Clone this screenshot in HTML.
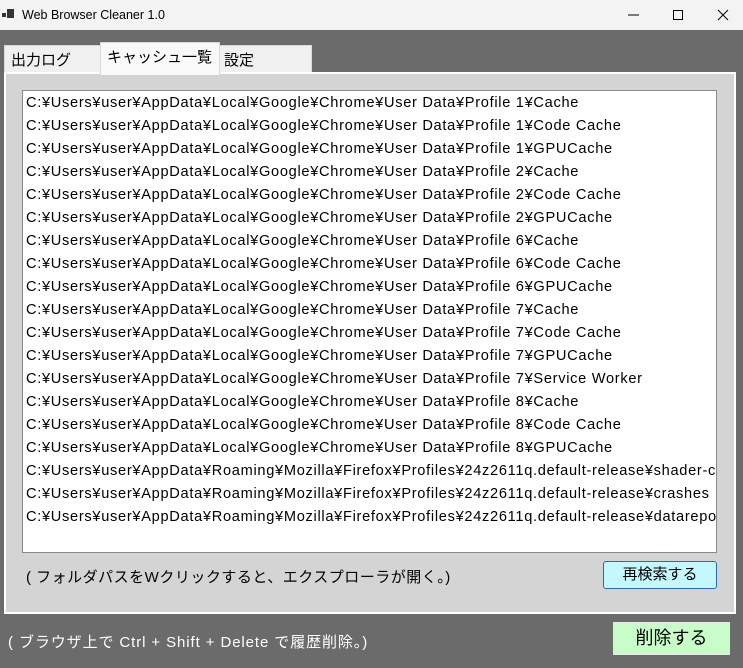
<!DOCTYPE html>
<html><head><meta charset="utf-8"><style>
*{margin:0;padding:0;box-sizing:border-box}
body{width:743px;height:668px;background:#6b6b6b;font-family:"Liberation Sans","Noto Sans CJK JP",sans-serif;position:relative;overflow:hidden}
.title{position:absolute;left:0;top:0;width:743px;height:30px;background:#f3f3f3;font-size:12.5px;color:#000}
.title .t{position:absolute;left:22px;top:8px}
.tab{position:absolute;background:#f0f0f0;border:1px solid #d9d9d9;border-bottom:none;font-size:15px;color:#000;padding:3px 0 0 6px}
.panel{position:absolute;left:4px;top:72px;width:732px;height:542px;background:#d4d4d4;border:2px solid #fff}
.list{position:absolute;left:22px;top:90px;width:695px;height:463px;background:#fff;border:1px solid #8a8a8a;overflow:hidden;font-size:14.6px;letter-spacing:0.7px;color:#000;padding-top:1px}
.list div{height:23px;line-height:23px;padding-left:3px;white-space:nowrap}
.btn{position:absolute;font-size:15px;text-align:center;color:#000}
.lbl{position:absolute;font-size:15px;white-space:nowrap}
</style></head><body>
<div class="title">
<svg style="position:absolute;left:2px;top:9px" width="14" height="12"><rect x="0" y="4" width="4" height="4" fill="#333"/><rect x="5" y="0" width="7" height="9" fill="#333"/></svg>
<span class="t">Web Browser Cleaner 1.0</span>
<svg style="position:absolute;left:626px;top:8px" width="110" height="14"><line x1="2" y1="7" x2="13" y2="7" stroke="#000"/><rect x="47.5" y="2.5" width="9" height="9" fill="none" stroke="#000"/><path d="M92 2 L102 12 M102 2 L92 12" stroke="#000"/></svg>
</div>
<div class="tab" style="left:4px;top:45px;width:97px;height:28px">出力ログ</div>
<div class="tab" style="left:219px;top:45px;width:93px;height:28px;padding-left:4px">設定</div>
<div class="panel"></div>
<div class="tab" style="left:100px;top:42px;width:120px;height:33px;background:#f9f9f9;border-color:#d9d9d9">キャッシュ一覧</div>
<div class="list">
<div>C:¥Users¥user¥AppData¥Local¥Google¥Chrome¥User Data¥Profile 1¥Cache</div>
<div>C:¥Users¥user¥AppData¥Local¥Google¥Chrome¥User Data¥Profile 1¥Code Cache</div>
<div>C:¥Users¥user¥AppData¥Local¥Google¥Chrome¥User Data¥Profile 1¥GPUCache</div>
<div>C:¥Users¥user¥AppData¥Local¥Google¥Chrome¥User Data¥Profile 2¥Cache</div>
<div>C:¥Users¥user¥AppData¥Local¥Google¥Chrome¥User Data¥Profile 2¥Code Cache</div>
<div>C:¥Users¥user¥AppData¥Local¥Google¥Chrome¥User Data¥Profile 2¥GPUCache</div>
<div>C:¥Users¥user¥AppData¥Local¥Google¥Chrome¥User Data¥Profile 6¥Cache</div>
<div>C:¥Users¥user¥AppData¥Local¥Google¥Chrome¥User Data¥Profile 6¥Code Cache</div>
<div>C:¥Users¥user¥AppData¥Local¥Google¥Chrome¥User Data¥Profile 6¥GPUCache</div>
<div>C:¥Users¥user¥AppData¥Local¥Google¥Chrome¥User Data¥Profile 7¥Cache</div>
<div>C:¥Users¥user¥AppData¥Local¥Google¥Chrome¥User Data¥Profile 7¥Code Cache</div>
<div>C:¥Users¥user¥AppData¥Local¥Google¥Chrome¥User Data¥Profile 7¥GPUCache</div>
<div>C:¥Users¥user¥AppData¥Local¥Google¥Chrome¥User Data¥Profile 7¥Service Worker</div>
<div>C:¥Users¥user¥AppData¥Local¥Google¥Chrome¥User Data¥Profile 8¥Cache</div>
<div>C:¥Users¥user¥AppData¥Local¥Google¥Chrome¥User Data¥Profile 8¥Code Cache</div>
<div>C:¥Users¥user¥AppData¥Local¥Google¥Chrome¥User Data¥Profile 8¥GPUCache</div>
<div>C:¥Users¥user¥AppData¥Roaming¥Mozilla¥Firefox¥Profiles¥24z2611q.default-release¥shader-cache</div>
<div>C:¥Users¥user¥AppData¥Roaming¥Mozilla¥Firefox¥Profiles¥24z2611q.default-release¥crashes</div>
<div>C:¥Users¥user¥AppData¥Roaming¥Mozilla¥Firefox¥Profiles¥24z2611q.default-release¥datareporting</div>
</div>
<div class="lbl" style="left:26px;top:566px;color:#000;letter-spacing:0.5px">( フォルダパスをWクリックすると、エクスプローラが開く。)</div>
<div class="btn" style="left:603px;top:561px;width:114px;height:28px;line-height:26px;background:#c4f8ff;border:1px solid #2b6cb0;border-radius:3px">再検索する</div>
<div class="lbl" style="left:8px;top:631px;color:#fff;letter-spacing:0.9px">( ブラウザ上で Ctrl + Shift + Delete で履歴削除。)</div>
<div class="btn" style="left:613px;top:622px;width:117px;height:33px;line-height:31px;background:#c8fcc8;border:1px solid #e8e8e8;font-size:18px">削除する</div>
</body></html>
